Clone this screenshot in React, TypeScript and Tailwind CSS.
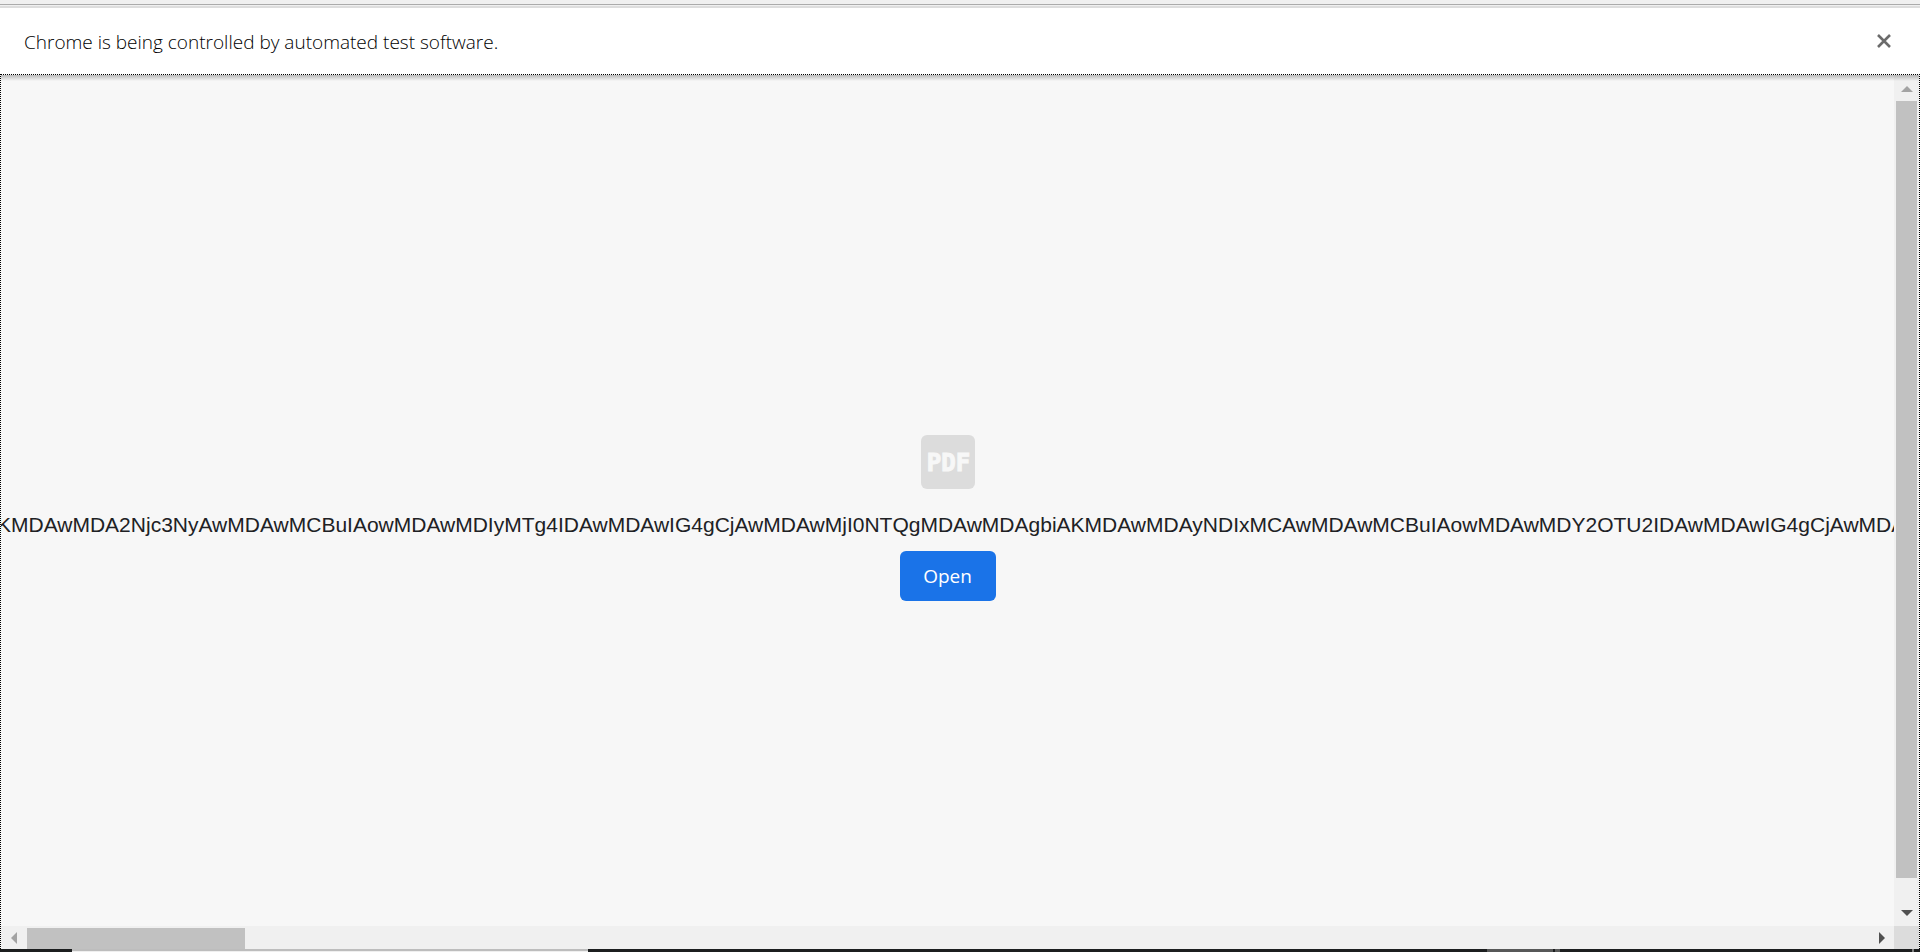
import type { ReactNode } from "react";

const encodedUrl =
  "KMDAwMDA2Njc3NyAwMDAwMCBuIAowMDAwMDIyMTg4IDAwMDAwIG4gCjAwMDAwMjI0NTQgMDAwMDAgbiAKMDAwMDAyNDIxMCAwMDAwMCBuIAowMDAwMDY2OTU2IDAwMDAwIG4gCjAwMDA";

function ArrowButton({ label, className, children }: { label: string; className: string; children: ReactNode }) {
  return (
    <button type="button" aria-label={label} className={`flex shrink-0 items-center justify-center ${className}`}>
      {children}
    </button>
  );
}

function InfoBar() {
  return (
    <div className="flex h-[66px] shrink-0 items-center justify-between bg-white pr-7 pl-6">
      <p className="pt-0.5 font-['Open_Sans',sans-serif] text-[19px] font-light text-black">
        Chrome is being controlled by automated test software.
      </p>
      <button type="button" aria-label="Close" className="text-[#6b6b6b]">
        <svg width="16" height="16" viewBox="0 0 16 16" stroke="currentColor" strokeWidth="2.6">
          <path d="M2 2L14 14M14 2L2 14" />
        </svg>
      </button>
    </div>
  );
}

function VerticalScrollbar() {
  return (
    <div className="flex w-[25px] shrink-0 flex-col bg-[#f0f0f0]">
      <ArrowButton label="Scroll up" className="h-[26px] pt-0.5 text-[#a3a3a3]">
        <svg width="12" height="6" viewBox="0 0 12 6" fill="currentColor">
          <path d="M0 6L6 0L12 6Z" />
        </svg>
      </ArrowButton>
      <div className="flex flex-1 flex-col px-0.5 pb-[22px]">
        <div className="flex-1 bg-[#c1c1c1]" />
      </div>
      <ArrowButton label="Scroll down" className="h-[26px] text-[#505050]">
        <svg width="12" height="6" viewBox="0 0 12 6" fill="currentColor">
          <path d="M0 0L6 6L12 0Z" />
        </svg>
      </ArrowButton>
    </div>
  );
}

function HorizontalScrollbar() {
  return (
    <div className="flex h-[23px] shrink-0 bg-[#f0f0f0]">
      <ArrowButton label="Scroll left" className="w-[26px] text-[#a3a3a3]">
        <svg width="6" height="12" viewBox="0 0 6 12" fill="currentColor">
          <path d="M6 0L0 6L6 12Z" />
        </svg>
      </ArrowButton>
      <div className="flex-1 pt-0.5">
        <div className="h-full w-[218px] bg-[#c1c1c1]" />
      </div>
      <ArrowButton label="Scroll right" className="w-6 text-[#505050]">
        <svg width="6" height="12" viewBox="0 0 6 12" fill="currentColor">
          <path d="M0 0L6 6L0 12Z" />
        </svg>
      </ArrowButton>
      <div className="w-[25px] bg-[#dcdcdc]" />
    </div>
  );
}

export default function App() {
  return (
    <div className="flex h-screen flex-col overflow-hidden bg-[#f7f7f7]">
      {/* Bottom edge of the browser toolbar */}
      <div className="h-1 shrink-0 bg-[#f0f0f0]" />
      <div className="h-1 shrink-0 border-t border-b-2 border-t-[#ababab] border-b-[#dddddd] bg-[#f0f0f0]" />

      <InfoBar />

      <div className="flex min-h-0 flex-1 flex-col border border-b-0 border-dotted border-black">
        <div className="relative flex min-h-0 flex-1">
          <main className="flex min-w-0 flex-1 flex-col items-center justify-center overflow-hidden pt-[34px]">
            <div className="flex size-[54px] items-center justify-center rounded-md bg-[#dcdcdc] pt-0.5 pl-0.5 font-['DejaVu_Sans_Mono',monospace] text-[24px] font-bold text-[#f7f7f7] [-webkit-text-stroke:1px_#f7f7f7]">
              PDF
            </div>
            <p className="mt-5 w-full overflow-hidden font-['Liberation_Sans',sans-serif] text-[21px] leading-8 whitespace-nowrap text-[#202124]">
              <span className="-ml-1">{encodedUrl}</span>
            </p>
            <button
              type="button"
              className="mt-2.5 h-[50px] w-24 rounded-md bg-[#1a73e8] pt-0.5 font-['Open_Sans',sans-serif] text-[19px] text-white"
            >
              Open
            </button>
          </main>
          <VerticalScrollbar />
          {/* Shadow cast by the info bar */}
          <div className="pointer-events-none absolute inset-x-0 top-0 h-1.5 bg-linear-to-b from-black/25 to-transparent" />
        </div>
        <HorizontalScrollbar />
      </div>

      {/* Top edge of the taskbar */}
      <div className="flex h-[3px] shrink-0 bg-[#1c1e1f]">
        <div className="w-[72px]" />
        <div className="w-[516px] border-t-2 border-[#bdbdbd] bg-[#efefef]" />
        <div className="flex-1" />
        <div className="w-[66px] bg-[#575858]" />
        <div className="ml-0.5 w-[5px] bg-[#575858]" />
        <div className="w-[352px]" />
        <div className="w-0.5 bg-[#808080]" />
        <div className="w-1.5" />
      </div>
    </div>
  );
}
